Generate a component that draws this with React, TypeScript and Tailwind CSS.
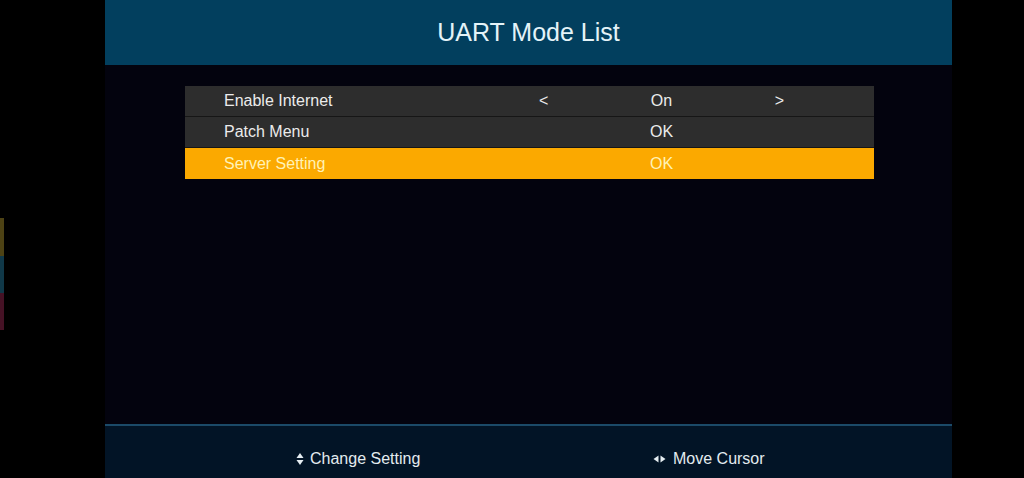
import { type ReactNode } from "react";

const rows = [
  { label: "Enable Internet", value: "On", arrows: true, active: false },
  { label: "Patch Menu", value: "OK", arrows: false, active: false },
  { label: "Server Setting", value: "OK", arrows: false, active: true },
];

function UpDownIcon() {
  return (
    <svg width="8" height="14" viewBox="0 0 8 14" className="mr-[6px]">
      <path d="M4 1 L7.5 6 H0.5 Z" fill="#e6eef2" />
      <path d="M4 13 L7.5 8 H0.5 Z" fill="#e6eef2" />
    </svg>
  );
}

function LeftRightIcon() {
  return (
    <svg width="13" height="8" viewBox="0 0 13 8" className="mr-[7px]">
      <path d="M0.5 4 L5.5 0.5 V7.5 Z" fill="#e6eef2" />
      <path d="M12.5 4 L7.5 0.5 V7.5 Z" fill="#e6eef2" />
    </svg>
  );
}

function Hint({ icon, children }: { icon: ReactNode; children: ReactNode }) {
  return (
    <div className="flex h-5 items-center text-[16px] leading-5 text-[#e3ebef]">
      {icon}
      <span>{children}</span>
    </div>
  );
}

export default function App() {
  return (
    <div
      className="flex h-[478px] w-[1024px] overflow-hidden bg-black"
      style={{ fontFamily: '"Liberation Sans", Arial, sans-serif' }}
    >
      {/* left edge colour strip */}
      <div className="w-[105px] shrink-0 pt-[218px]">
        <div className="h-[38px] w-[4px] bg-[#4d4214]" />
        <div className="h-[37px] w-[4px] bg-[#103848]" />
        <div className="h-[37px] w-[4px] bg-[#451225]" />
      </div>

      {/* main panel */}
      <div className="flex w-[847px] shrink-0 flex-col">
        <div className="flex h-[65px] items-center justify-center bg-[#023f5e]">
          <h1 className="text-[25px] leading-none text-[#e4f3f8]">UART Mode List</h1>
        </div>

        <div className="flex-1 bg-[#03030e] pl-[80px] pt-[21px]">
          <div className="w-[689px]">
            {rows.map((r, i) => (
              <div
                key={r.label}
                className={`flex h-[31px] items-center text-[16px] ${
                  r.active ? "bg-[#fba900] text-[#fff2b6]" : "bg-[#2d2d2d] text-[#ebebeb]"
                } ${i < rows.length - 1 ? "border-b border-[#161616]" : ""}`}
              >
                <div className="w-[354px] pl-[39px]">{r.label}</div>
                <div className="flex w-[245px] items-center justify-between">
                  {r.arrows ? <span>&lt;</span> : <span />}
                  <span>{r.value}</span>
                  {r.arrows ? <span>&gt;</span> : <span />}
                </div>
              </div>
            ))}
          </div>
        </div>

        <div className="flex h-[54px] items-start border-t-2 border-[#1b4a68] bg-[#021426] pl-[191px] pt-[23px]">
          <div className="w-[357px]">
            <Hint icon={<UpDownIcon />}>Change Setting</Hint>
          </div>
          <Hint icon={<LeftRightIcon />}>Move Cursor</Hint>
        </div>
      </div>

      <div className="flex-1 bg-black" />
    </div>
  );
}
